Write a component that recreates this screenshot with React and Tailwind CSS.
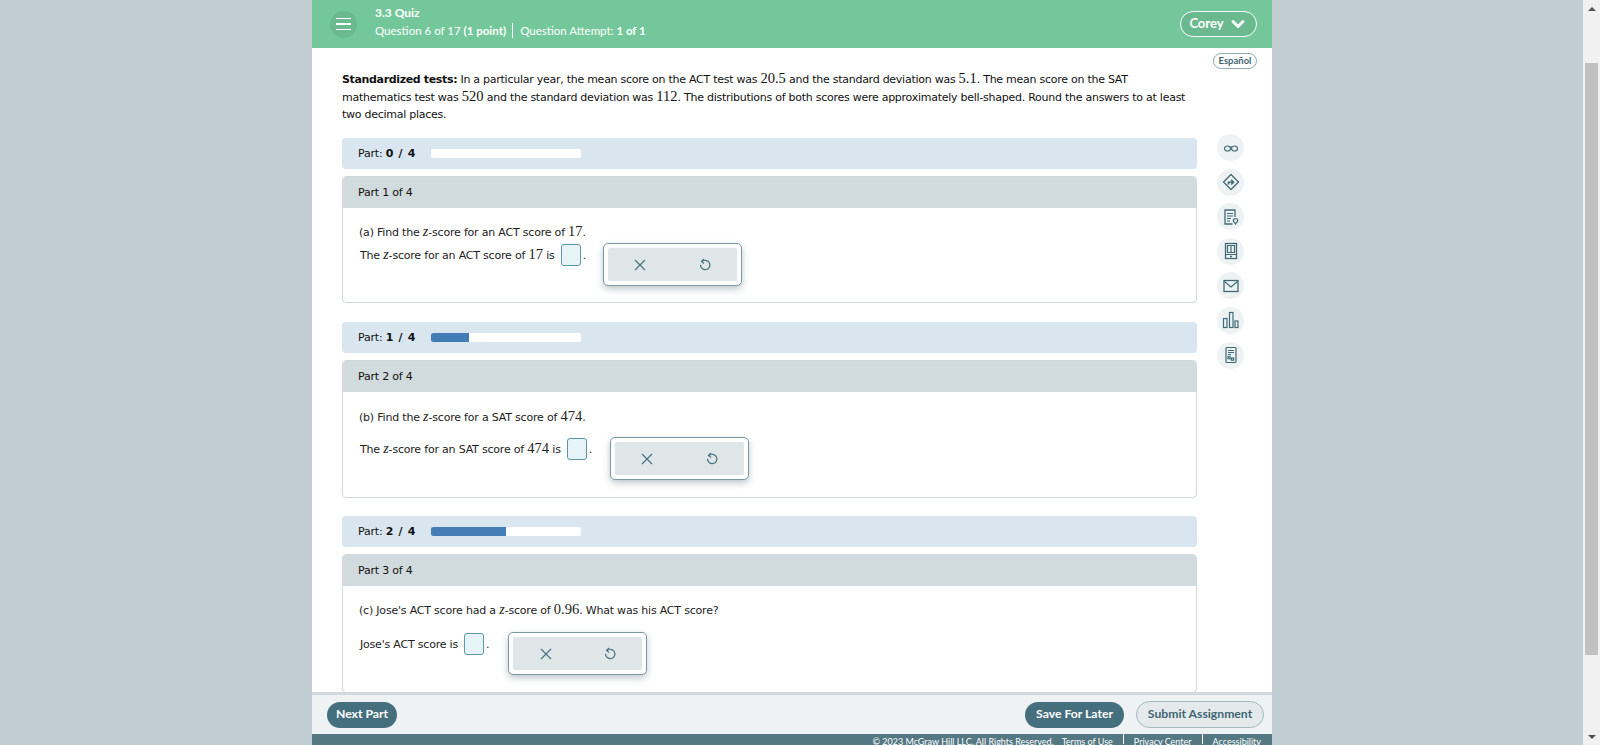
import React from "react";
import { ChevronDown } from "lucide-react";

const headFont = "font-['Lato',sans-serif]";
const bodyFont = "font-['DejaVu_Sans',sans-serif]";
const bodyText = "text-[11px] tracking-[-0.2px]";

const N = ({ children }) => (
    <span className="font-['Liberation_Serif',serif] text-[14.500px] leading-[1] tracking-normal">{children}</span>
);

const Z = () => <span className="font-['Liberation_Serif',serif] italic text-[14px] leading-[1] tracking-normal">z</span>;

const ToolCircle = ({ children }) => (
    <div className="w-[27px] h-[27px] rounded-full bg-[#eef2f3] flex items-center justify-center text-[#3f6b78]">
        {children}
    </div>
);

const iconProps = { fill: "none", stroke: "currentColor", strokeWidth: 1.2 };

const tools = [
    <svg key="glasses" width="16" height="16" viewBox="0 0 16 16" {...iconProps}>
        <ellipse cx="4.500" cy="8.500" rx="3" ry="2.500" />
        <ellipse cx="11.500" cy="8.500" rx="3" ry="2.500" />
        <path d="M7 7h2" />
    </svg>,
    <svg key="sign" width="18" height="18" viewBox="0 0 18 18" {...iconProps}>
        <path d="M9 1.500L16.500 9 9 16.500 1.500 9z" strokeWidth="1.3" />
        <path d="M6.500 11.500V9.200h4.500M9.200 6.800L11.500 9.200 9.200 11.500" strokeWidth="1.6" />
    </svg>,
    <svg key="notes" width="18" height="18" viewBox="0 0 18 18" {...iconProps}>
        <path d="M10.500 16H3V2h10v7" strokeWidth="1.300" />
        <path d="M5 5.500h6M5 8h6M5 10.500h4M5 13h3" />
        <path d="M13.500 10.500a2.200 2.200 0 0 1 2.200 2.200c0 1.100-1.200 1.600-2.200 3.300-1-1.700-2.200-2.200-2.200-3.300a2.200 2.200 0 0 1 2.200-2.200z" />
    </svg>,
    <svg key="book" width="18" height="18" viewBox="0 0 18 18" {...iconProps}>
        <rect x="3.500" y="1.500" width="11" height="15" strokeWidth="1.300" />
        <path d="M5.500 3.500h7v7h-7zM9 3.500v7M3.500 12.500h11" />
        <path d="M8 14.500h2" strokeWidth="1.500" />
    </svg>,
    <svg key="mail" width="18" height="18" viewBox="0 0 18 18" {...iconProps}>
        <rect x="2" y="3.500" width="14" height="11" strokeWidth="1.300" />
        <path d="M2.500 4.500L9 10l6.500-5.500" />
    </svg>,
    <svg key="chart" width="18" height="20" viewBox="0 0 18 20" {...iconProps}>
        <rect x="1.500" y="8.500" width="3.500" height="9" />
        <rect x="7.500" y="2.500" width="3.500" height="15" />
        <rect x="13" y="11" width="3" height="6.500" />
    </svg>,
    <svg key="report" width="18" height="18" viewBox="0 0 18 18" {...iconProps}>
        <rect x="4" y="1.500" width="10" height="15" rx="1" />
        <path d="M6 4.500h6M6 6.500h6M6 8.500h3" />
        <rect x="6" y="10.500" width="2.200" height="2.200" />
        <rect x="9.500" y="12" width="2.200" height="2.200" />
    </svg>,
];

const ProgressBar = ({ done }) => (
    <div className={`h-[31px] rounded-[4px] bg-[#dae6ef] flex items-center pl-[16px] text-[#111] ${bodyText}`}>
        <span className="w-[73px] pt-[2px] whitespace-pre">
            Part: <b className="tracking-[0.7px]">{done} / 4</b>
        </span>
        <div className="w-[150px] h-[9px] rounded-[2px] bg-white overflow-hidden">
            {done > 0 && <div className="h-full bg-[#447cb5]" style={{ width: `${done * 25}%` }} />}
        </div>
    </div>
);

const AnswerInput = () => (
    <span className="w-[20px] h-[22px] ml-[6px] mr-[2px] rounded-[3px] border border-[#5d98a8] bg-[#e6f3f7] shrink-0" />
);

const ActionBox = ({ className }) => (
    <div className={`w-[139px] h-[43px] -mt-px p-[4px] rounded-[5px] bg-white border border-[#7a98a3] shadow-[0_3px_7px_rgba(40,70,80,0.3)] shrink-0 ${className}`}>
        <div className="h-full rounded-[2px] bg-[#dfe6e8] flex items-center text-[#4a7280]">
            <div className="w-[65px] flex justify-center">
                <svg width="14" height="14" viewBox="0 0 14 14" fill="none" stroke="currentColor" strokeWidth="1.200">
                    <path d="M2 2l10 10M12 2L2 12" />
                </svg>
            </div>
            <div className="w-[65px] flex justify-center">
                <svg width="14" height="14" viewBox="0 0 14 14" fill="none" stroke="currentColor" strokeWidth="1.200">
                    <path d="M4 3.500a4.700 4.700 0 1 1-1.500 3.300" />
                    <path d="M6 1L3.500 3.500 6 5.500" />
                </svg>
            </div>
        </div>
    </div>
);

const PartCard = ({ title, question, answer, bodyClass, rowClass, boxClass, mb }) => (
    <div className={`mt-[7px] rounded-[4px] border border-[#cfd9dc] overflow-hidden ${bodyText} ${mb}`}>
        <div className="h-[32px] -mx-px -mt-px bg-[#d1dadc] flex items-center pl-[16px] pt-[2px] text-[#111]">
            {title}
        </div>
        <div className={`pl-[16px] text-[#222] ${bodyClass}`}>
            <div className="h-[20px] leading-[22px]">{question}</div>
            <div className={`flex items-start ${rowClass}`}>
                <span className="pl-[1px] leading-[24px] whitespace-pre">{answer}</span>
                <AnswerInput />
                <span className="leading-[24px]">.</span>
                <ActionBox className={boxClass} />
            </div>
        </div>
    </div>
);

export default function App() {
    return (
        <div className={`h-screen overflow-hidden flex bg-[#c1cdd3] ${bodyFont}`}>
            <div className="w-[312px] shrink-0" />

            <div className="w-[960px] shrink-0 flex flex-col bg-white">
                {/* Header */}
                <div className={`h-[48px] shrink-0 bg-[#73c79a] flex items-center text-white ${headFont}`}>
                    <div className="ml-[18px] w-[27px] h-[27px] rounded-full bg-[#6bb98f] flex flex-col items-center justify-center gap-[4px]">
                        <span className="w-[15px] h-[1.500px] bg-white" />
                        <span className="w-[15px] h-[1.500px] bg-white" />
                        <span className="w-[15px] h-[1.500px] bg-white" />
                    </div>
                    <div className="ml-[18px] flex-1">
                        <div className="text-[12px] leading-[14px] font-bold -mt-[4px] mb-[3px]">3.3 Quiz</div>
                        <div className="flex items-center text-[11.500px] leading-[15px]">
                            <span>Question 6 of 17 <b>(1 point)</b></span>
                            <span className="w-px h-[15px] bg-white mx-[6px]" />
                            <span className="ml-[1px]">Question Attempt: <b>1 of 1</b></span>
                        </div>
                    </div>
                    <div className="mr-[15px] w-[77px] h-[26px] rounded-full border border-white bg-[#6bb98f] flex items-center justify-center gap-[4px] text-[13px] font-bold">
                        Corey
                        <ChevronDown size={20} strokeWidth={3.500} />
                    </div>
                </div>

                {/* Scrolling content */}
                <div className="flex-1 min-h-0 overflow-hidden">
                    <div className="h-[23px] pt-[5px] pr-[15px] flex justify-end">
                        <div className={`w-[44px] h-[16px] rounded-full border border-[#93abb3] flex items-center justify-center text-[9.500px] leading-[12px] font-bold text-[#3f6573] ${headFont}`}>
                            Español
                        </div>
                    </div>
                    <div className="flex">
                        <div className="w-[855px] ml-[30px] shrink-0">
                            <p className="text-[11px] tracking-[-0.26px] leading-[17.500px] text-[#111] mb-[14.500px] pr-[2px]">
                                <b className="tracking-[-0.35px]">Standardized tests:</b> In a particular year, the mean score on the ACT test was <N>20.5</N> and the standard deviation was <N>5.1</N>. The mean score on the SAT mathematics test was <N>520</N> and the standard deviation was <N>112</N>. The distributions of both scores were approximately bell-shaped. Round the answers to at least two decimal places.
                            </p>

                            <ProgressBar done={0} />
                            <PartCard
                                title="Part 1 of 4"
                                question={<>(a) Find the <Z />-score for an ACT score of <N>17</N>.</>}
                                answer={<>The <Z />-score for an ACT score of <N>17</N> is</>}
                                bodyClass="pt-[14px] pb-[16px]"
                                rowClass="mt-[2px]"
                                boxClass="ml-[17px]"
                                mb="mb-[19px]"
                            />

                            <ProgressBar done={1} />
                            <PartCard
                                title="Part 2 of 4"
                                question={<>(b) Find the <Z />-score for a SAT score of <N>474</N>.</>}
                                answer={<>The <Z />-score for an SAT score of <N>474</N> is</>}
                                bodyClass="pt-[15px] pb-[17px]"
                                rowClass="mt-[11px]"
                                boxClass="ml-[18px]"
                                mb="mb-[18px]"
                            />

                            <ProgressBar done={2} />
                            <PartCard
                                title="Part 3 of 4"
                                question={<>(c) Jose's ACT score had a <Z />-score of <N>0.96</N>. What was his ACT score?</>}
                                answer={<>Jose's ACT score is</>}
                                bodyClass="pt-[14px] pb-[17px]"
                                rowClass="mt-[13px]"
                                boxClass="ml-[19px]"
                                mb=""
                            />
                        </div>

                        <div className="ml-[20px] pt-[63px] flex flex-col gap-[7.600px]">
                            {tools.map((icon) => (
                                <ToolCircle key={icon.key}>{icon}</ToolCircle>
                            ))}
                        </div>
                    </div>
                </div>

                {/* Footer */}
                <div className={`h-[42px] shrink-0 border-t-[3px] border-[#d0d9dc] bg-[#eef2f3] flex items-center pl-[15px] pr-[8px] font-bold text-[12.200px] ${headFont}`}>
                    <div className="w-[70px] h-[26px] rounded-full bg-[#466f7e] text-white flex items-center justify-center">
                        Next Part
                    </div>
                    <div className="ml-auto w-[99px] h-[26px] rounded-full bg-[#466f7e] text-white flex items-center justify-center">
                        Save For Later
                    </div>
                    <div className="ml-[12px] w-[128px] h-[27px] rounded-full border border-[#a4b8bf] bg-[#e4eaec] text-[#3f6573] flex items-center justify-center">
                        Submit Assignment
                    </div>
                </div>
                <div className={`h-[11px] shrink-0 bg-[#537882] overflow-hidden flex justify-end pr-[11px] text-[9px] leading-[15px] text-white whitespace-pre ${headFont}`}>
                    <span className="mr-[8px]">© 2023 McGraw Hill LLC. All Rights Reserved.</span>
                    <span>Terms of Use</span>
                    <span className="w-px h-[10px] bg-white mx-[10px]" />
                    <span>Privacy Center</span>
                    <span className="w-px h-[10px] bg-white mx-[10px]" />
                    <span>Accessibility</span>
                </div>
            </div>

            <div className="flex-1" />

            {/* Browser scrollbar */}
            <div className="w-[17px] shrink-0 bg-[#f1f1f1] flex flex-col items-center">
                <div className="h-[17px] flex items-center justify-center shrink-0">
                    <span className="border-x-[4px] border-x-transparent border-b-[4px] border-b-[#505050]" />
                </div>
                <div className="h-[46px] shrink-0" />
                <div className="w-[13px] h-[592px] shrink-0 bg-[#c1c1c1]" />
                <div className="flex-1" />
                <div className="h-[17px] flex items-center justify-center shrink-0">
                    <span className="border-x-[4px] border-x-transparent border-t-[4px] border-t-[#505050]" />
                </div>
            </div>
        </div>
    );
}
